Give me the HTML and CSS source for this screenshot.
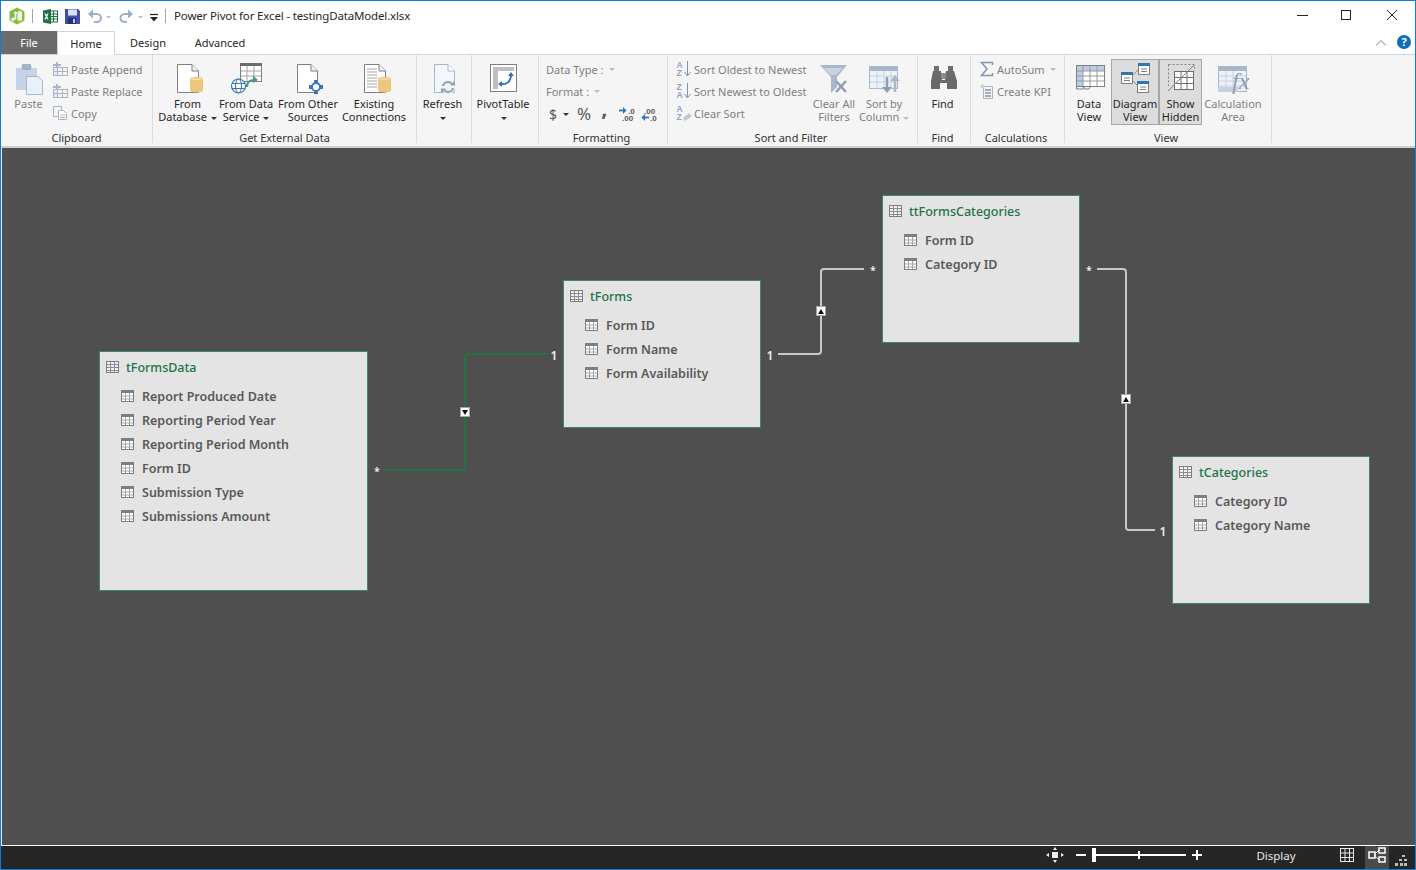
FILE: index.html
```html
<!DOCTYPE html>
<html lang="en">
<head>
    <meta charset="UTF-8">
    <title>Power Pivot for Excel - testingDataModel.xlsx</title>
    <link rel="stylesheet" href="styles.css">
</head>
<body>
<svg class="defs" width="0" height="0">
    <defs>
        <symbol id="field" viewBox="0 0 14 14">
            <rect x="0.5" y="1.5" width="12" height="11" fill="#fff" stroke="#7f7f7f"/>
            <rect x="0" y="1" width="13" height="3" fill="#7f7f7f"/>
            <path d="M4.5 4v8M8.5 4v8M1 7h11M1 10h11" stroke="#a6a6a6" fill="none"/>
        </symbol>
        <symbol id="tablehead" viewBox="0 0 14 14">
            <rect x="0.5" y="1.5" width="12" height="11" fill="#f2f2f2" stroke="#7f7f7f"/>
            <path d="M1 4.5h11M1 7.5h11M1 10.5h11M4.5 2v10M8.5 2v10" stroke="#8c8c8c" fill="none"/>
        </symbol>
        <symbol id="smalltable" viewBox="0 0 16 16">
            <rect x="1.5" y="6.5" width="4" height="8" fill="#e6ebf3" stroke="#a9b4c4"/>
            <rect x="5.5" y="6.5" width="10" height="8" fill="#f4f4f4" stroke="#a9b4c4"/>
            <path d="M6 10.500h9M2 10.500h3M10.500 7v7" stroke="#a9b4c4"/>
            <rect x="4" y="1" width="2" height="5" fill="#a9b4c4"/>
            <rect x="1" y="3" width="8" height="2" fill="#a9b4c4"/>
        </symbol>
        <symbol id="cylinder" viewBox="0 0 13 17">
            <path d="M0 2.5C0 .5 13 .5 13 2.5V14.5C13 17 0 17 0 14.5Z" fill="#eac77c"/>
            <path d="M0 2.5C0 4.5 13 4.5 13 2.5" fill="#f6e0ad"/>
        </symbol>
    </defs>
</svg>
<div class="window">
    <header class="titlebar">
        <svg class="qat-logo" width="18" height="18" viewBox="0 0 18 18">
            <path d="M9 0.5L16.5 4.5V13.5L9 17.5L1.5 13.5V4.5Z" fill="#86bd3a"/>
            <path d="M10 5H13.500V13H10ZM10 9H14" fill="#d9edbd" stroke="#fff"/>
            <path d="M11.800 4v10" stroke="#fff"/>
            <path d="M7.500 5V11C7.500 12.500 6 12.500 4 12.500" stroke="#fff" stroke-width="1.600" fill="none"/>
            <path d="M5.500 10V15L2.500 12.500Z" fill="#fff"/>
            <path d="M5.500 6.500L7.500 4L9.500 6.500Z" fill="#fff"/>
        </svg>
        <span class="qat-sep qat-sep-first"></span>
        <svg class="qat-excel" width="15" height="15" viewBox="0 0 15 15">
            <rect x="6" y="2" width="8.500" height="11" fill="#fff" stroke="#1e7145"/>
            <path d="M7 5h7M7 7.500h7M7 10h7M10.500 2v11" stroke="#1e7145"/>
            <path d="M0 1.500L8 0V15L0 13.500Z" fill="#1e7145"/>
            <path d="M2 4.500l3 6M5 4.500l-3 6" stroke="#fff" stroke-width="1.200"/>
        </svg>
        <svg class="qat-save" width="15" height="15" viewBox="0 0 15 15">
            <path d="M0 0H13L15 2V15H0Z" fill="#3f4fa8"/>
            <rect x="3" y="0.500" width="9" height="6" fill="#d9e4f5"/>
            <rect x="3" y="9" width="8" height="6" fill="#26306f"/>
            <rect x="8" y="10" width="2" height="4" fill="#c5cbe6"/>
        </svg>
        <svg class="qat-undo" width="26" height="15" viewBox="0 0 26 15">
            <path d="M2 5H9.500C12.500 5 14 7 14 9S12.500 13 9.500 13H7" stroke="#9db0c9" stroke-width="2" fill="none"/>
            <path d="M6 0.500V9.500L1 5Z" fill="#9db0c9"/>
            <path d="M19 7h5l-2.500 2.500Z" fill="#bdbdbd"/>
        </svg>
        <svg class="qat-redo" width="26" height="15" viewBox="0 0 26 15">
            <path d="M13 5H6C3 5 1.500 7 1.500 9S3 13 6 13H8" stroke="#9db0c9" stroke-width="2" fill="none"/>
            <path d="M9 0.500V9.500L14 5Z" fill="#9db0c9"/>
            <path d="M19 7h5l-2.500 2.500Z" fill="#bdbdbd"/>
        </svg>
        <svg class="qat-custom" width="8" height="9" viewBox="0 0 8 9">
            <path d="M0 1.500h8" stroke="#222" stroke-width="1.200"/>
            <path d="M0 4h8L4 8.500Z" fill="#222"/>
        </svg>
        <span class="qat-sep qat-sep-second"></span>
        <span class="window-title">Power Pivot for Excel - testingDataModel.xlsx</span>
        <div class="window-controls">
            <svg width="12" height="12" viewBox="0 0 12 12"><path d="M1 5.500h11" stroke="#222"/></svg>
            <svg width="12" height="12" viewBox="0 0 12 12"><rect x="0.500" y="0.500" width="9" height="9" fill="none" stroke="#222"/></svg>
            <svg width="12" height="12" viewBox="0 0 12 12"><path d="M1 0l10 10M11 0L1 10" stroke="#222"/></svg>
        </div>
    </header>

    <nav class="tabs">
        <span class="tab tab-file">File</span>
        <span class="tab tab-home">Home</span>
        <span class="tab tab-design">Design</span>
        <span class="tab tab-advanced">Advanced</span>
        <svg class="ribbon-collapse" width="12" height="8" viewBox="0 0 12 8"><path d="M1 6.500L6 1.500L11 6.500" stroke="#b5b5b5" stroke-width="1.200" fill="none"/></svg>
        <span class="help-btn">?</span>
    </nav>

    <section class="ribbon">
        <div class="group group-clipboard">
            <div class="group-body">
                <div class="big-btn btn-paste off">
                    <div class="big-icon">
                        <svg width="34" height="34" viewBox="0 0 34 34">
                            <path d="M4 6H9V4H20V6H25V28H4Z" fill="#c6d3e6"/>
                            <rect x="10" y="2" width="9" height="6" fill="#a4b3c7"/>
                            <path d="M14.500 14.500H26L30.500 19V32.500H14.500Z" fill="#eaf0f8" stroke="#a9b7cb"/>
                        </svg>
                    </div>
                    <span>Paste</span>
                </div>
                <div class="small-col clip-col">
                    <div class="small-row off"><svg width="16" height="16"><use href="#smalltable"/></svg><span>Paste Append</span></div>
                    <div class="small-row off"><svg width="16" height="16"><use href="#smalltable"/></svg><span>Paste Replace</span></div>
                    <div class="small-row off">
                        <svg width="16" height="16" viewBox="0 0 16 16">
                            <rect x="1.500" y="1.500" width="8" height="10" fill="#f4f4f4" stroke="#a9b4c4"/>
                            <path d="M6.500 5.500h5l3 3v6h-8Z" fill="#fff" stroke="#a9b4c4"/>
                            <path d="M8 10h5M8 12.500h5" stroke="#a9b4c4"/>
                        </svg>
                        <span>Copy</span>
                    </div>
                </div>
            </div>
            <div class="group-label">Clipboard</div>
        </div>

        <div class="group group-external">
            <div class="group-body">
                <div class="big-btn btn-database">
                    <div class="big-icon">
                        <svg width="34" height="34" viewBox="0 0 34 34">
                            <path d="M6.500 2.500H21L27.500 9V30.500H6.500Z" fill="#fff" stroke="#7f7f7f"/>
                            <path d="M21 2.500V9H27.500" fill="#f2f2f2" stroke="#7f7f7f"/>
                            <svg x="19" y="14" width="13" height="17" viewBox="0 0 13 17"><use href="#cylinder"/></svg>
                        </svg>
                    </div>
                    <span>From</span>
                    <span>Database <i class="caret"></i></span>
                </div>
                <div class="big-btn btn-service">
                    <div class="big-icon">
                        <svg width="34" height="34" viewBox="0 0 34 34">
                            <rect x="11.500" y="1.500" width="21" height="18" fill="#fff" stroke="#7f7f7f"/>
                            <rect x="11" y="1" width="22" height="3" fill="#6d6d6d"/>
                            <path d="M12 9h20M12 14h20M18 4v15M25 4v15" stroke="#a6a6a6"/>
                            <circle cx="9.500" cy="24" r="7" fill="#fff" stroke="#3a78b5" stroke-width="1.200"/>
                            <ellipse cx="9.500" cy="24" rx="3" ry="7" fill="none" stroke="#3a78b5"/>
                            <path d="M3 21.500h13M3 26.500h13" stroke="#3a78b5"/>
                            <path d="M18 25C18 20 21 18 25 18" stroke="#4a9a8a" stroke-width="2.200" fill="none"/>
                            <path d="M24 13.500L29 18L24 21Z" fill="#4a9a8a"/>
                        </svg>
                    </div>
                    <span>From Data</span>
                    <span>Service <i class="caret"></i></span>
                </div>
                <div class="big-btn btn-other">
                    <div class="big-icon">
                        <svg width="34" height="34" viewBox="0 0 34 34">
                            <path d="M6.500 2.500H20L26.500 9V30.500H6.500Z" fill="#fff" stroke="#7f7f7f"/>
                            <path d="M20 2.500V9H26.500" fill="#f2f2f2" stroke="#7f7f7f"/>
                            <path d="M25 18V32M18 25H32" stroke="#3a78b5" stroke-width="1.500"/>
                            <circle cx="25" cy="25" r="4" fill="#fff" stroke="#3a78b5" stroke-width="1.800"/>
                            <path d="M23 18h4v3h-4ZM23 29h4v3h-4ZM18 23h3v4h-3ZM29 23h3v4h-3Z" fill="#3a78b5"/>
                        </svg>
                    </div>
                    <span>From Other</span>
                    <span>Sources</span>
                </div>
                <div class="big-btn btn-existing">
                    <div class="big-icon">
                        <svg width="34" height="34" viewBox="0 0 34 34">
                            <path d="M7.500 2.500H22L28.500 9V30.500H7.500Z" fill="#fff" stroke="#7f7f7f"/>
                            <path d="M22 2.500V9H28.500" fill="#f2f2f2" stroke="#7f7f7f"/>
                            <path d="M10 7h10M10 10h10M10 13h10M10 16h10M10 19h10M10 22h10M10 25h10" stroke="#a6a6a6"/>
                            <svg x="21" y="14" width="13" height="17" viewBox="0 0 13 17"><use href="#cylinder"/></svg>
                        </svg>
                    </div>
                    <span>Existing</span>
                    <span>Connections</span>
                </div>
            </div>
            <div class="group-label">Get External Data</div>
        </div>

        <div class="group group-refresh">
            <div class="group-body">
                <div class="big-btn">
                    <div class="big-icon">
                        <svg width="34" height="34" viewBox="0 0 34 34">
                            <path d="M8.500 2.500H22L28.500 9V30.500H8.500Z" fill="#f3f6fb" stroke="#a9b7cb"/>
                            <path d="M22 2.500V9H28.500" fill="#fff" stroke="#a9b7cb"/>
                            <circle cx="22" cy="25" r="7" fill="#f5f5f5"/>
                            <path d="M17 24C17.500 20 23 18.500 26 22M27 26C26.500 30 21 31.500 18 28" stroke="#8fa3bd" stroke-width="2" fill="none"/>
                            <path d="M24 23.500H29V18.500ZM20 26.500H15V31.500Z" fill="#8fa3bd"/>
                        </svg>
                    </div>
                    <span>Refresh</span>
                    <span><i class="caret"></i></span>
                </div>
            </div>
        </div>

        <div class="group group-pivot">
            <div class="group-body">
                <div class="big-btn">
                    <div class="big-icon">
                        <svg width="34" height="34" viewBox="0 0 34 34">
                            <rect x="4.500" y="2.500" width="26" height="27" fill="#fff" stroke="#7f7f7f"/>
                            <rect x="7" y="5" width="21" height="4" fill="#bfbfbf"/>
                            <rect x="7" y="5" width="5" height="22" fill="#bfbfbf"/>
                            <path d="M15 22C21 23 25 19 25 13" stroke="#2e75b6" stroke-width="1.800" fill="none"/>
                            <path d="M22 14h6l-3-4ZM16 19v6l-4-3Z" fill="#2e75b6"/>
                        </svg>
                    </div>
                    <span>PivotTable</span>
                    <span><i class="caret"></i></span>
                </div>
            </div>
        </div>

        <div class="group group-format">
            <div class="group-body">
                <div class="small-col">
                    <div class="small-row off"><span>Data Type :</span><i class="caret caret-off caret-wide"></i></div>
                    <div class="small-row off"><span>Format :</span><i class="caret caret-off caret-wide"></i></div>
                    <div class="format-row off">
                        <span class="fmt-dollar">$</span><i class="caret fmt-caret"></i>
                        <span class="fmt-percent">%</span>
                        <span class="fmt-comma">,</span>
                        <svg class="fmt-inc" width="16" height="14" viewBox="0 0 16 14">
                            <path d="M0 3.500h5" stroke="#2e75b6" stroke-width="1.800"/><path d="M4 0l3.500 3.500-3.500 3.500Z" fill="#2e75b6"/>
                            <text x="9" y="6.500" class="fmt-num">.0</text><text x="3" y="13.500" class="fmt-num">.00</text>
                        </svg>
                        <svg class="fmt-dec" width="16" height="14" viewBox="0 0 16 14">
                            <text x="3" y="6.500" class="fmt-num">.00</text><text x="9" y="13.500" class="fmt-num">.0</text>
                            <path d="M3 10.500h5" stroke="#2e75b6" stroke-width="1.800"/><path d="M4 7L.5 10.500 4 14Z" fill="#2e75b6"/>
                        </svg>
                    </div>
                </div>
            </div>
            <div class="group-label">Formatting</div>
        </div>

        <div class="group group-sort">
            <div class="group-body">
                <div class="small-col sort-col">
                    <div class="small-row off">
                        <svg class="sort-icon" width="16" height="16" viewBox="0 0 16 16">
                            <text x="0.500" y="6.500" class="sort-letter">A</text><text x="0.500" y="15" class="sort-letter">Z</text>
                            <path d="M11.500 0v14" stroke="#7e93ae"/><path d="M8.500 11l3 4 3-4" stroke="#7e93ae" fill="none"/>
                        </svg>
                        <span>Sort Oldest to Newest</span>
                    </div>
                    <div class="small-row off">
                        <svg class="sort-icon" width="16" height="16" viewBox="0 0 16 16">
                            <text x="0.500" y="6.500" class="sort-letter">Z</text><text x="0.500" y="15" class="sort-letter">A</text>
                            <path d="M11.500 0v14" stroke="#7e93ae"/><path d="M8.500 11l3 4 3-4" stroke="#7e93ae" fill="none"/>
                        </svg>
                        <span>Sort Newest to Oldest</span>
                    </div>
                    <div class="small-row off">
                        <svg class="sort-icon" width="16" height="16" viewBox="0 0 16 16">
                            <text x="0.500" y="6.500" class="sort-letter">A</text><text x="0.500" y="15" class="sort-letter">Z</text>
                            <path d="M7 13L13 8L16 11L10 15.500H8Z" fill="#bcc8d8"/>
                        </svg>
                        <span>Clear Sort</span>
                    </div>
                </div>
                <div class="big-btn btn-clear off">
                    <div class="big-icon">
                        <svg width="34" height="34" viewBox="0 0 34 34">
                            <path d="M3 3H30L20 15V25L14 31V15Z" fill="#a9b7cb"/>
                            <path d="M7 6H26L19 13H13Z" fill="#c8d2e0"/>
                            <path d="M19 19L29 30M29 19L19 30" stroke="#8d9db3" stroke-width="2.500"/>
                        </svg>
                    </div>
                    <span>Clear All</span>
                    <span>Filters</span>
                </div>
                <div class="big-btn btn-sortby off">
                    <div class="big-icon">
                        <svg width="34" height="34" viewBox="0 0 34 34">
                            <rect x="2.500" y="4.500" width="28" height="22" fill="#eef2f8" stroke="#a9b7cb"/>
                            <rect x="2" y="4" width="29" height="5" fill="#a9b7cb"/>
                            <path d="M3 14h27M3 20h27M10 9v18M17 9v18M24 9v18" stroke="#c6d1e0"/>
                            <path d="M20 15V28" stroke="#8d9db3" stroke-width="2.500"/><path d="M15 25h10l-5 6Z" fill="#8d9db3"/>
                            <path d="M28 30V17" stroke="#a9b7cb" stroke-width="2.500"/><path d="M23 19h10l-5-6Z" fill="#a9b7cb"/>
                        </svg>
                    </div>
                    <span>Sort by</span>
                    <span>Column <i class="caret caret-off"></i></span>
                </div>
            </div>
            <div class="group-label">Sort and Filter</div>
        </div>

        <div class="group group-find">
            <div class="group-body">
                <div class="big-btn">
                    <div class="big-icon">
                        <svg width="34" height="34" viewBox="0 0 34 34">
                            <path d="M8 4h5v5h-5ZM22 4h5v5h-5Z" fill="#6f6f6f"/>
                            <path d="M7 9H15L16 18H19L20 9H28L31 19V27H21V21H14V27H5V19Z" fill="#6a6a6a"/>
                            <path d="M15 11h5v6h-5Z" fill="#8c8c8c"/>
                        </svg>
                    </div>
                    <span>Find</span>
                </div>
            </div>
            <div class="group-label">Find</div>
        </div>

        <div class="group group-calc">
            <div class="group-body">
                <div class="small-col">
                    <div class="small-row off">
                        <svg width="16" height="16" viewBox="0 0 16 16"><path d="M13.500 4V1.500H2.500L8 8L2.500 14.500H13.500V12" fill="none" stroke="#8496ae" stroke-width="1.500"/></svg>
                        <span>AutoSum</span><i class="caret caret-off caret-wide"></i>
                    </div>
                    <div class="small-row off">
                        <svg width="16" height="16" viewBox="0 0 16 16">
                            <rect x="4.500" y="3.500" width="9" height="12" fill="#f4f4f4" stroke="#a9b4c4"/>
                            <path d="M6 7h6M6 10h6M6 13h6" stroke="#8496ae" stroke-width="1.500"/>
                            <path d="M3.500 0l.8 2 2 .3-1.500 1.400.4 2-1.700-1-1.800 1 .4-2L1 2.300l2-.3Z" fill="#c4d2e4"/>
                        </svg>
                        <span>Create KPI</span>
                    </div>
                </div>
            </div>
            <div class="group-label">Calculations</div>
        </div>

        <div class="group group-view">
            <div class="group-body">
                <div class="big-btn btn-dataview">
                    <div class="big-icon">
                        <svg width="34" height="34" viewBox="0 0 34 34">
                            <rect x="4.500" y="3.500" width="28" height="21" fill="#fff" stroke="#7f7f7f"/>
                            <rect x="5" y="4" width="27" height="5" fill="#b9cde5"/>
                            <rect x="5" y="4" width="6" height="20" fill="#b9cde5"/>
                            <path d="M5 9h27M5 14h27M5 19h27M11 4v20M18 4v20M25 4v20" stroke="#9a9a9a"/>
                            <path d="M4.500 24.500v2.500h6l1.500-2.500M12 24.500v2.500h5l1.500-2.500" fill="none" stroke="#7f7f7f"/>
                        </svg>
                    </div>
                    <span>Data</span>
                    <span>View</span>
                </div>
                <div class="big-btn btn-diagram active">
                    <div class="big-icon">
                        <svg width="34" height="34" viewBox="0 0 34 34">
                            <path d="M14 14L21 7M14 18L21 25" stroke="#8a8a8a"/>
                            <rect x="20.500" y="1.500" width="11" height="11" fill="#fff" stroke="#7f7f7f"/>
                            <rect x="20" y="1" width="12" height="3" fill="#2e75b6"/>
                            <path d="M23 7h6M23 9.500h6" stroke="#7f7f7f"/>
                            <rect x="3.500" y="10.500" width="11" height="11" fill="#fff" stroke="#7f7f7f"/>
                            <rect x="3" y="10" width="12" height="3" fill="#2e75b6"/>
                            <path d="M6 16h6M6 18.500h6" stroke="#7f7f7f"/>
                            <rect x="19.500" y="19.500" width="11" height="11" fill="#fff" stroke="#7f7f7f"/>
                            <rect x="19" y="19" width="12" height="3" fill="#2e75b6"/>
                            <path d="M22 25h6M22 27.500h6" stroke="#7f7f7f"/>
                        </svg>
                    </div>
                    <span>Diagram</span>
                    <span>View</span>
                </div>
                <div class="big-btn btn-hidden active">
                    <div class="big-icon">
                        <svg width="34" height="34" viewBox="0 0 34 34">
                            <path d="M4.500 2.500H30.500V9" fill="none" stroke="#7f7f7f" stroke-dasharray="2 2"/>
                            <path d="M4.500 2.500V24" fill="none" stroke="#7f7f7f" stroke-dasharray="2 2"/>
                            <rect x="10.500" y="9.500" width="19" height="18" fill="#fff" stroke="#6f6f6f"/>
                            <path d="M17 10v17M23 10v17M11 15.500h18M11 21.500h18" stroke="#6f6f6f"/>
                            <path d="M4 29L30 3" stroke="#7f7f7f"/>
                        </svg>
                    </div>
                    <span>Show</span>
                    <span>Hidden</span>
                </div>
                <div class="big-btn btn-calcarea off">
                    <div class="big-icon">
                        <svg width="34" height="34" viewBox="0 0 34 34">
                            <rect x="2.500" y="4.500" width="28" height="25" fill="#eef2f8" stroke="#a9b7cb"/>
                            <rect x="2" y="4" width="29" height="5" fill="#a9b7cb"/>
                            <path d="M3 14h27M3 19h27M3 24h27M10 9v20M17 9v20" stroke="#c6d1e0"/>
                            <rect x="2" y="25" width="20" height="5" fill="#c6d1e0"/>
                            <text x="16" y="27" class="calc-fx">fx</text>
                        </svg>
                    </div>
                    <span>Calculation</span>
                    <span>Area</span>
                </div>
            </div>
            <div class="group-label">View</div>
        </div>
    </section>

    <main class="canvas">
        <svg class="links" width="1412" height="697" viewBox="2 148 1412 697">
            <path class="link-green" d="M385 470H462Q465 470 465 467V357Q465 354 468 354H546"/>
            <path class="link-white" d="M778 354H818Q821 354 821 351V272Q821 269 824 269H864"/>
            <path class="link-white" d="M1097 269H1123Q1126 269 1126 272V527Q1126 530 1129 530H1155"/>
            <g class="marker"><rect x="460.500" y="407.500" width="9" height="9"/><path d="M462 410H468L465 415Z"/></g>
            <g class="marker"><rect x="816.500" y="306.500" width="9" height="9"/><path d="M818 314H824L821 309Z"/></g>
            <g class="marker"><rect x="1121.500" y="394.500" width="9" height="9"/><path d="M1123 402H1129L1126 397Z"/></g>
            <text class="end-label" x="377" y="475">*</text>
            <text class="end-label" x="873" y="274">*</text>
            <text class="end-label" x="1089" y="274">*</text>
            <text class="end-label one" x="554" y="360">1</text>
            <text class="end-label one" x="770" y="360">1</text>
            <text class="end-label one" x="1163" y="536">1</text>
        </svg>

        <div class="node node-data">
            <div class="node-title"><svg width="14" height="14"><use href="#tablehead"/></svg>tFormsData</div>
            <div class="field"><svg width="14" height="14"><use href="#field"/></svg>Report Produced Date</div>
            <div class="field"><svg width="14" height="14"><use href="#field"/></svg>Reporting Period Year</div>
            <div class="field"><svg width="14" height="14"><use href="#field"/></svg>Reporting Period Month</div>
            <div class="field"><svg width="14" height="14"><use href="#field"/></svg>Form ID</div>
            <div class="field"><svg width="14" height="14"><use href="#field"/></svg>Submission Type</div>
            <div class="field"><svg width="14" height="14"><use href="#field"/></svg>Submissions Amount</div>
        </div>
        <div class="node node-forms">
            <div class="node-title"><svg width="14" height="14"><use href="#tablehead"/></svg>tForms</div>
            <div class="field"><svg width="14" height="14"><use href="#field"/></svg>Form ID</div>
            <div class="field"><svg width="14" height="14"><use href="#field"/></svg>Form Name</div>
            <div class="field"><svg width="14" height="14"><use href="#field"/></svg>Form Availability</div>
        </div>
        <div class="node node-link">
            <div class="node-title"><svg width="14" height="14"><use href="#tablehead"/></svg>ttFormsCategories</div>
            <div class="field"><svg width="14" height="14"><use href="#field"/></svg>Form ID</div>
            <div class="field"><svg width="14" height="14"><use href="#field"/></svg>Category ID</div>
        </div>
        <div class="node node-cats">
            <div class="node-title"><svg width="14" height="14"><use href="#tablehead"/></svg>tCategories</div>
            <div class="field"><svg width="14" height="14"><use href="#field"/></svg>Category ID</div>
            <div class="field"><svg width="14" height="14"><use href="#field"/></svg>Category Name</div>
        </div>
    </main>

    <footer class="statusbar">
        <svg class="zoom-tools" width="160" height="22" viewBox="0 0 160 22">
            <path d="M8 6h4l-2-3ZM8 16h4l-2 3ZM4 9v4l-3-2ZM16 9v4l3-2Z" fill="#eee"/>
            <rect x="7" y="8" width="6" height="6" fill="#eee"/>
            <path d="M31 11h10" stroke="#fff" stroke-width="2"/>
            <rect x="47" y="4" width="4" height="14" fill="#fff"/>
            <path d="M50 11h91" stroke="#fff" stroke-width="2"/>
            <path d="M94 7v8" stroke="#fff" stroke-width="2"/>
            <path d="M147 11h10M152 6v10" stroke="#fff" stroke-width="2"/>
        </svg>
        <span class="status-display">Display</span>
        <svg class="status-grid" width="14" height="14" viewBox="0 0 14 14">
            <rect x="0.500" y="0.500" width="13" height="13" fill="none" stroke="#e6e6e6"/>
            <path d="M5 1v12M9.500 1v12M1 5h12M1 9.500h12" stroke="#e6e6e6"/>
        </svg>
        <span class="status-active">
            <svg width="18" height="16" viewBox="0 0 18 16">
                <path d="M6 8L11 3M6 8L11 13" stroke="#e6e6e6"/>
                <rect x="1" y="5" width="6" height="6" fill="none" stroke="#fff" stroke-width="1.500"/>
                <rect x="11" y="1" width="6" height="5" fill="none" stroke="#fff" stroke-width="1.500"/>
                <rect x="11" y="10" width="6" height="5" fill="none" stroke="#fff" stroke-width="1.500"/>
            </svg>
        </span>
        <svg class="status-grip" width="14" height="12" viewBox="0 0 14 12">
            <path d="M8 0h3v2H8ZM5 4h3v2H5ZM10 4h3v2h-3ZM1 8h3v3H1ZM6 8h3v3H6ZM10 8h3v3h-3Z" fill="#bdbdbd"/>
        </svg>
    </footer>
</div>
</body>
</html>
```

FILE: styles.css
```css
* {
    box-sizing: border-box;
}

html, body {
    margin: 0;
    padding: 0;
}

body {
    font-family: "Noto Sans", "Open Sans", sans-serif;
    font-size: 11px;
    color: #262626;
    background-color: #ffffff;
    overflow: hidden;
}

.defs {
    position: absolute;
}

.window {
    width: 1416px;
    height: 870px;
    border: 1px solid #0f7fd4;
    display: flex;
    flex-direction: column;
    background-color: #ffffff;
}

/* title bar */
.titlebar {
    height: 30px;
    flex: none;
    display: flex;
    align-items: center;
    font-size: 11.5px;
    letter-spacing: -0.15px;
}

.qat-logo { margin-left: 7px; }
.qat-sep { width: 1px; height: 14px; background-color: #a6a6a6; }
.qat-sep-first { margin-left: 6px; }
.qat-excel { margin-left: 10px; }
.qat-save { margin-left: 7px; }
.qat-undo { margin-left: 7px; }
.qat-redo { margin-left: 6px; }
.qat-custom { margin-left: 5px; margin-top: 3px; }
.qat-sep-second { margin-left: 7px; }

.window-title {
    margin-left: 8px;
    margin-bottom: 1px;
    color: #262626;
}

.window-controls {
    margin-left: auto;
    display: flex;
    gap: 33px;
    padding-right: 17px;
}

/* tabs */
.tabs {
    height: 24px;
    flex: none;
    display: flex;
    align-items: stretch;
    border-bottom: 1px solid #d4d4d4;
    position: relative;
}

.tab {
    display: flex;
    align-items: center;
    justify-content: center;
    padding-bottom: 1px;
}

.tab-file {
    width: 56px;
    background-color: #6b6b6b;
    color: #ffffff;
}

.tab-home {
    width: 58px;
    background-color: #ffffff;
    border: 1px solid #d4d4d4;
    border-bottom: none;
    margin-bottom: -1px;
}

.tab-design { width: 66px; }
.tab-advanced { width: 78px; }

.ribbon-collapse {
    margin-left: auto;
    margin-top: 8px;
}

.help-btn {
    width: 14px;
    height: 14px;
    border-radius: 50%;
    margin: 4px 4px 0 10px;
    background-color: #0f6cbd;
    color: #ffffff;
    font-size: 11px;
    font-weight: 700;
    line-height: 14px;
    text-align: center;
}

/* ribbon */
.ribbon {
    height: 93px;
    flex: none;
    display: flex;
    background-color: #f5f5f5;
    border-bottom: 2px solid #d0d0d0;
}

.group {
    display: flex;
    flex-direction: column;
    padding-top: 4px;
    height: 88px;
    border-right: 1px solid #dcdcdc;
    flex: none;
}

.group-body {
    height: 71px;
    flex: none;
    display: flex;
}

.group-label {
    height: 14px;
    line-height: 15px;
    text-align: center;
    color: #333333;
}

.group-clipboard { width: 152px; }
.group-clipboard .group-body { padding-left: 4px; }
.group-external { width: 264px; }
.group-external .group-body { padding-left: 6px; }
.group-refresh { width: 55px; }
.group-refresh .group-body { padding-right: 3px; }
.group-pivot { width: 67px; }
.group-pivot .group-body { padding-right: 4px; }
.group-format { width: 129px; }
.group-format .group-body { padding-left: 7px; }
.group-format .group-label { padding-right: 3px; }
.group-sort { width: 250px; }
.group-sort .group-body { padding-left: 8px; }
.group-sort .group-label { padding-right: 3px; }
.group-find { width: 53px; }
.group-find .group-body { padding-right: 3px; }
.group-find .group-label { padding-right: 3px; }
.group-calc { width: 94px; }
.group-calc .group-body { padding-left: 8px; }
.group-calc .group-label { padding-right: 3px; }
.group-view { width: 207px; }
.group-view .group-body { padding-left: 2px; }
.group-view .group-label { padding-right: 4px; }

.big-btn {
    display: flex;
    flex-direction: column;
    align-items: center;
    height: 66px;
    line-height: 13px;
    white-space: nowrap;
    flex: 1;
}

.big-icon {
    height: 38px;
    padding-top: 3px;
    flex: none;
}

.big-icon svg {
    display: block;
}

.off {
    color: #7f7f7f;
}

.btn-paste { flex: none; width: 47px; }
.btn-database { flex: none; width: 57px; }
.btn-service { flex: none; width: 60px; }
.btn-other { flex: none; width: 64px; }
.btn-existing { flex: none; width: 68px; }
.btn-clear { flex: none; width: 46px; }
.btn-sortby { flex: none; width: 54px; }
.btn-dataview { flex: none; width: 44px; }
.btn-diagram { flex: none; width: 48px; }
.btn-hidden { flex: none; width: 43px; }
.btn-calcarea { flex: none; width: 62px; }

.active {
    background-color: #dcdcdc;
    border: 1px solid #a6a6a6;
}

.active .big-icon {
    height: 37px;
    padding-top: 2px;
}

.caret {
    display: inline-block;
    width: 0;
    height: 0;
    border-left: 3px solid transparent;
    border-right: 3px solid transparent;
    border-top: 3px solid #333333;
    vertical-align: middle;
    margin-left: 1px;
}

.caret-off {
    border-top-color: #bdbdbd;
}

.caret-wide {
    margin-left: 3px;
}

.small-col {
    display: flex;
    flex-direction: column;
    margin-top: -1px;
}

.clip-col .small-row {
    gap: 3px;
}

.sort-col {
    width: 135px;
}

.small-row {
    height: 22px;
    display: flex;
    align-items: center;
    gap: 2px;
    white-space: nowrap;
}

.sort-icon {
    overflow: visible;
}

.format-row {
    height: 22px;
    display: flex;
    align-items: center;
    padding-left: 3px;
    margin-top: 1px;
    color: #595959;
}

.fmt-dollar { font-size: 14px; width: 8px; }
.fmt-caret { margin-left: 6px; }
.fmt-percent { font-size: 17px; margin-left: 8px; line-height: 20px; }
.fmt-comma { font-size: 22px; font-weight: 700; margin-left: 10px; margin-top: -14px; width: 7px; line-height: 20px; }
.fmt-inc { margin-left: 11px; overflow: visible; }
.fmt-dec { margin-left: 6px; overflow: visible; }

.fmt-num {
    font-family: "Liberation Sans", sans-serif;
    font-size: 8px;
    font-weight: 700;
    fill: #595959;
}

.sort-letter {
    font-family: "Liberation Sans", sans-serif;
    font-size: 8.5px;
    font-weight: 700;
    fill: #8ba4c4;
}

.calc-fx {
    font-family: "Liberation Serif", serif;
    font-style: italic;
    font-size: 24px;
    fill: #8d9db3;
}

/* diagram canvas */
.canvas {
    flex: 1;
    position: relative;
    background-color: #4f4f4f;
    border-left: 1px solid #e8e8e8;
    border-bottom: 1px solid #ffffff;
}

.links {
    position: absolute;
    left: 0;
    top: 0;
}

.link-green,
.link-white {
    fill: none;
    stroke-width: 2;
}

.link-green { stroke: #217346; }
.link-white { stroke: #c8c8c8; }

.marker rect { fill: #ffffff; stroke: #a6a6a6; }
.marker path { fill: #111111; }

.end-label {
    fill: #e6eef8;
    font-size: 10px;
    font-weight: 700;
    text-anchor: middle;
}

.one {
    font-size: 12px;
    font-weight: 600;
}

.node {
    position: absolute;
    background-color: #e4e4e4;
    border: 1px solid #3c8a62;
    padding: 5px 0 0 6px;
}

.node-data { left: 97px; top: 203px; width: 269px; height: 240px; }
.node-forms { left: 561px; top: 132px; width: 198px; height: 148px; }
.node-link { left: 880px; top: 47px; width: 198px; height: 148px; }
.node-cats { left: 1170px; top: 308px; width: 198px; height: 148px; }

.node-title {
    height: 20px;
    display: flex;
    align-items: center;
    gap: 6px;
    color: #217346;
    font-size: 12.5px;
    font-weight: 500;
    margin-bottom: 7px;
}

.field {
    height: 24px;
    display: flex;
    align-items: center;
    gap: 7px;
    margin-left: 15px;
    color: #595959;
    font-size: 12.5px;
    font-weight: 600;
}

/* status bar */
.statusbar {
    height: 23px;
    flex: none;
    display: flex;
    align-items: center;
    background-color: #262626;
    color: #e6e6e6;
    padding-left: 1044px;
    padding-bottom: 5px;
}

.status-display {
    width: 100px;
    margin-left: 21px;
    text-align: center;
    font-size: 11.5px;
}

.status-grid { margin-left: 14px; }

.status-active {
    width: 24px;
    height: 23px;
    margin-left: 11px;
    margin-bottom: -5px;
    background-color: #4a4a4a;
    display: flex;
    align-items: center;
    justify-content: center;
    padding-bottom: 5px;
}

.status-grip { margin-left: 5px; margin-top: 11px; }
```
